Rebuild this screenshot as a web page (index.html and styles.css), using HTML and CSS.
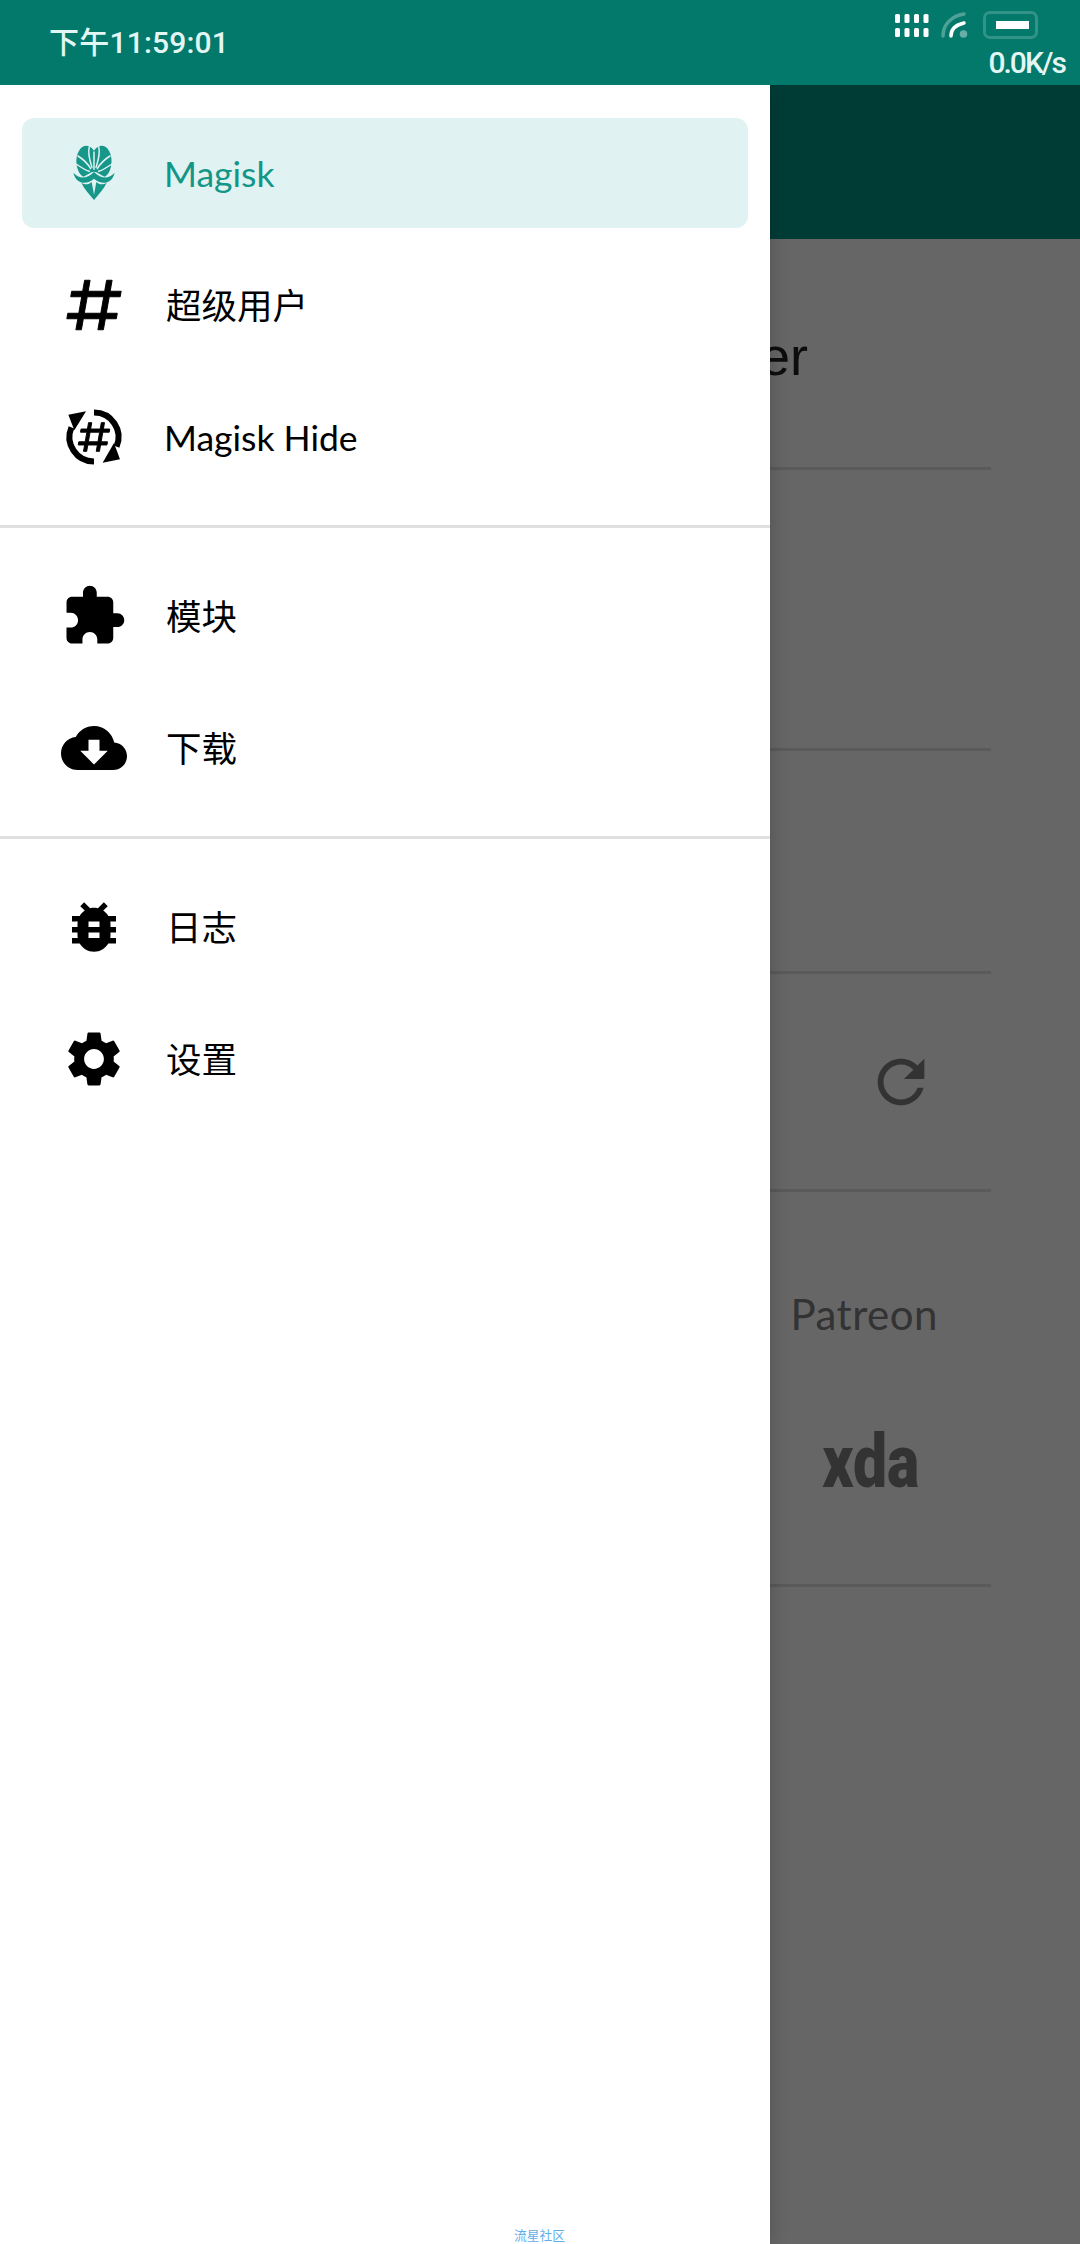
FILE: index.html
```html
<!DOCTYPE html>
<html lang="zh">
<head>
<meta charset="utf-8">
<title>Magisk</title>
<link rel="stylesheet" href="styles.css">
</head>
<body>
<div class="app">
  <header class="statusbar">
    <div class="time">下午11:59:01</div>
    <div class="status-right">
      <div class="status-icons">
        <svg class="ic-signal" width="36" height="26" viewBox="0 0 36 26" fill="#fff">
          <rect x="0" y="2" width="5" height="9" rx="1.5"/><rect x="9.500" y="2" width="5" height="9" rx="1.500"/><rect x="19" y="2" width="5" height="9" rx="1.500"/><rect x="28.500" y="2" width="5" height="9" rx="1.500"/>
          <rect x="0" y="16" width="5" height="9" rx="1.500"/><rect x="9.500" y="16" width="5" height="9" rx="1.500"/><rect x="19" y="16" width="5" height="9" rx="1.500"/><rect x="28.500" y="16" width="5" height="9" rx="1.500"/>
        </svg>
        <svg class="ic-wifi" width="30" height="28" viewBox="0 0 30 28" fill="none">
          <path d="M3 25C3 14 11 5 24 3" stroke="#fff" stroke-opacity=".3" stroke-width="3.500" stroke-linecap="round"/>
          <path d="M11 25C11 19 15 14 24 12" stroke="#fff" stroke-width="3.500" stroke-linecap="round"/>
          <circle cx="23.500" cy="23" r="3.800" fill="#fff" fill-opacity=".4"/>
        </svg>
        <div class="battery"><span class="battery-level"></span></div>
      </div>
      <div class="speed">0.0K/s</div>
    </div>
  </header>

  <main class="main">
    <div class="toolbar"></div>
    <section class="row row-title"><span class="title">Magisk Manager</span></section>
    <section class="row row-a"></section>
    <section class="row row-b"></section>
    <section class="row row-refresh">
      <svg class="refresh" width="70" height="70" viewBox="0 0 24 24"><path d="M17.65 6.35C16.2 4.9 14.21 4 12 4c-4.42 0-7.99 3.58-7.99 8s3.57 8 7.99 8c3.730 0 6.840-2.550 7.730-6h-2.080c-.82 2.330-3.040 4-5.650 4-3.310 0-6-2.690-6-6s2.690-6 6-6c1.660 0 3.140.69 4.220 1.780L13 11h7V4l-2.350 2.350z"/></svg>
    </section>
    <section class="row row-links">
      <span class="patreon">Patreon</span>
      <span class="xda">xda</span>
    </section>
  </main>

  <div class="scrim"></div>

  <nav class="drawer">
    <div class="group">
      <a class="item active">
        <svg class="icon" viewBox="31 30 198 198">
          <path fill="#17968a" d="M130 62C118 44 98 42 88 58C76 74 74 100 82 120C86 130 90 136 98 140C110 135 120 125 130 125C140 125 150 135 162 140C170 136 174 130 178 120C186 100 184 74 172 58C162 42 142 44 130 62Z"/>
          <g fill="none" stroke="#e0f2f1" stroke-width="4.500" stroke-linecap="round">
            <path d="M130 118V66"/>
            <path d="M124 112C118 92 110 72 116 50"/>
            <path d="M136 112C142 92 150 72 144 50"/>
            <path d="M120 116C112 102 98 88 82 78"/>
            <path d="M140 116C148 102 162 88 178 78"/>
            <path d="M116 124C106 122 94 114 76 102"/>
            <path d="M144 124C154 122 166 114 184 102"/>
          </g>
          <path fill="#17968a" d="M68 128C84 146 106 150 130 126C154 150 176 146 192 128C182 166 150 164 130 146C110 164 78 166 68 128Z"/>
          <path fill="#17968a" d="M92 158C100 176 116 192 130 210C144 192 160 176 168 158C156 166 146 164 137 156L130 194L123 156C114 164 104 166 92 158Z"/>
        </svg>
        <span class="label latin">Magisk</span>
      </a>
      <a class="item">
        <svg class="icon" viewBox="0 0 24 24"><path stroke="#000" stroke-width=".35" d="M5.410 21L6.120 17H2.120L2.470 15H6.470L7.530 9H3.530L3.880 7H7.880L8.590 3H10.590L9.880 7H15.880L16.590 3H18.590L17.880 7H21.880L21.530 9H17.530L16.470 15H20.470L20.120 17H16.120L15.410 21H13.410L14.120 17H8.120L7.410 21H5.410M9.530 9L8.470 15H14.470L15.530 9H9.530Z"/></svg>
        <span class="label">超级用户</span>
      </a>
      <a class="item">
        <svg class="icon" viewBox="0 0 24 24">
          <path fill="none" stroke="#000" stroke-width="2.200" d="M12 3.100A8.900 8.900 0 0 1 20.200 15.500"/>
          <path fill="none" stroke="#000" stroke-width="2.200" d="M12 20.900A8.900 8.900 0 0 1 3.800 8.500"/>
          <path d="M15.150 21.330L21.450 20.120L19.270 14.180Z"/>
          <path d="M2.670 3.880L9.100 2.670L4.850 9.580Z"/>
          <path transform="translate(12 12) scale(.58) translate(-12 -12)" stroke="#000" stroke-width=".6" d="M5.410 21L6.120 17H2.120L2.470 15H6.470L7.530 9H3.530L3.880 7H7.880L8.590 3H10.590L9.880 7H15.880L16.590 3H18.590L17.880 7H21.880L21.530 9H17.530L16.470 15H20.470L20.120 17H16.120L15.410 21H13.410L14.120 17H8.120L7.410 21H5.410M9.530 9L8.470 15H14.470L15.530 9H9.530Z"/>
        </svg>
        <span class="label latin">Magisk Hide</span>
      </a>
    </div>
    <div class="group">
      <a class="item">
        <svg class="icon" viewBox="0 0 24 24"><path d="M20.500 11H19V7c0-1.100-.9-2-2-2h-4V3.500C13 2.120 11.880 1 10.500 1S8 2.120 8 3.500V5H4c-1.100 0-1.990.9-1.990 2v3.800H3.500c1.490 0 2.700 1.210 2.700 2.700s-1.210 2.700-2.700 2.700H2V20c0 1.100.9 2 2 2h3.800v-1.500c0-1.490 1.210-2.700 2.700-2.700 1.490 0 2.700 1.210 2.700 2.700V22H17c1.100 0 2-.9 2-2v-4h1.500c1.380 0 2.500-1.120 2.500-2.500S21.880 11 20.500 11z"/></svg>
        <span class="label">模块</span>
      </a>
      <a class="item">
        <svg class="icon" viewBox="0 0 24 24"><path d="M19.350 10.040C18.670 6.590 15.640 4 12 4 9.110 4 6.600 5.640 5.350 8.040 2.340 8.360 0 10.910 0 14c0 3.310 2.690 6 6 6h13c2.760 0 5-2.240 5-5 0-2.640-2.050-4.780-4.650-4.960zM17 13l-5 5-5-5h3V9h4v4h3z"/></svg>
        <span class="label">下载</span>
      </a>
    </div>
    <div class="group">
      <a class="item">
        <svg class="icon" viewBox="0 0 24 24"><path d="M20 8h-2.810c-.45-.78-1.070-1.450-1.820-1.960L17 4.410 15.590 3l-2.170 2.170C12.960 5.060 12.490 5 12 5c-.49 0-.96.06-1.410.17L8.410 3 7 4.410l1.620 1.630C7.880 6.550 7.260 7.220 6.810 8H4v2h2.090c-.05.33-.09.66-.09 1v1H4v2h2v1c0 .34.04.67.09 1H4v2h2.810c1.040 1.790 2.970 3 5.190 3s4.150-1.210 5.190-3H20v-2h-2.090c.05-.33.09-.66.09-1v-1h2v-2h-2v-1c0-.34-.04-.67-.09-1H20V8zm-6 8h-4v-2h4v2zm0-4h-4v-2h4v2z"/></svg>
        <span class="label">日志</span>
      </a>
      <a class="item">
        <svg class="icon" viewBox="0 0 24 24"><path d="M19.140 12.940c.04-.3.06-.61.06-.94 0-.32-.02-.64-.07-.94l2.030-1.580c.18-.14.23-.41.12-.61l-1.920-3.320c-.12-.22-.37-.29-.59-.22l-2.390.96c-.5-.38-1.030-.7-1.620-.94l-.36-2.540c-.04-.24-.24-.41-.48-.41h-3.840c-.24 0-.43.17-.47.41l-.36 2.540c-.59.24-1.130.57-1.620.94l-2.390-.96c-.22-.08-.47 0-.59.22L2.740 8.870c-.12.21-.08.47.12.61l2.030 1.580c-.05.3-.09.63-.09.94s.02.64.07.94l-2.030 1.580c-.18.14-.23.41-.12.61l1.920 3.320c.12.22.37.29.59.22l2.390-.96c.5.38 1.030.7 1.620.94l.36 2.540c.05.24.24.41.48.41h3.840c.24 0 .44-.17.47-.41l.36-2.540c.59-.24 1.130-.56 1.620-.94l2.390.96c.22.08.47 0 .59-.22l1.920-3.320c.12-.22.07-.47-.12-.61l-2.010-1.580zM12 15.600c-1.980 0-3.600-1.620-3.600-3.600s1.620-3.600 3.600-3.600 3.600 1.620 3.600 3.600-1.620 3.600-3.600 3.600z"/></svg>
        <span class="label">设置</span>
      </a>
    </div>
  </nav>

  <div class="watermark">流星社区</div>
</div>
</body>
</html>
```
FILE: styles.css
```css
* { box-sizing: border-box; }
html, body { margin: 0; padding: 0; }
body { font-family: "Lato", "Noto Sans CJK SC", sans-serif; background: #fff; }

.app {
  position: relative;
  width: 1080px;
  height: 2244px;
  overflow: hidden;
  display: flex;
  flex-direction: column;
}

/* status bar */
.statusbar {
  flex: none;
  height: 85px;
  background: #02796b;
  color: #e2f6f3;
  display: flex;
  justify-content: space-between;
  padding: 0 15px 0 49px;
  font-family: "Roboto", "Noto Sans CJK SC", sans-serif;
  position: relative;
  z-index: 3;
}
.time { font-size: 30px; font-weight: 500; letter-spacing: .2px; line-height: 85px; }
.status-right {
  display: flex;
  flex-direction: column;
  align-items: flex-end;
  padding-top: 11px;
}
.status-icons {
  display: flex;
  align-items: center;
  gap: 13px;
  height: 28px;
  margin-right: 27px;
}
.ic-wifi { margin-left: -4px; }
.battery {
  width: 55px;
  height: 28px;
  border: 3px solid rgba(255, 255, 255, .2);
  border-radius: 7px;
  padding: 7px 6px 7px 10px;
  display: flex;
}
.battery-level { flex: 1; background: #fff; }
.speed {
  font-size: 30px;
  font-weight: 500;
  line-height: 34px;
  letter-spacing: -2px;
  margin-top: 7px;
}

/* page behind the drawer */
.main { flex: 1; display: flex; flex-direction: column; padding: 0 89px; }
.toolbar { flex: none; height: 154px; margin: 0 -89px; background: #009688; }
.row { flex: none; border-bottom: 3px solid #e0e0e0; display: flex; }
.row-title { height: 231px; justify-content: flex-end; padding: 85px 183px 0 0; }
.title {
  font-family: "Liberation Sans", sans-serif;
  font-size: 54px;
  line-height: 64px;
  color: #212121;
  white-space: nowrap;
}
.row-a { height: 281px; }
.row-b { height: 223px; }
.row-refresh { height: 218px; justify-content: flex-end; align-items: center; padding-right: 55px; }
.refresh { fill: #808080; }
.row-links {
  height: 395px;
  flex-direction: column;
  align-items: flex-end;
  color: #808080;
}
.patreon {
  font-size: 42px;
  line-height: 50px;
  margin: 97px 53px 0 0;
  letter-spacing: 0.5px;
}
.xda {
  font-family: "Roboto", sans-serif;
  font-weight: 900;
  font-size: 74px;
  line-height: 74px;
  margin: 86px 72px 0 0;
  transform: scaleX(.82);
  transform-origin: right center;
}

/* overlays */
.scrim {
  position: absolute;
  inset: 85px 0 0 0;
  background: rgba(0, 0, 0, .6);
}
.drawer {
  position: absolute;
  top: 85px;
  left: 0;
  bottom: 0;
  width: 770px;
  background: #fff;
  box-shadow: 0 0 18px rgba(0, 0, 0, .22);
}
.group {
  padding: 33px 22px;
  display: flex;
  flex-direction: column;
  gap: 22px;
  border-bottom: 3px solid #e0e0e0;
}
.group:last-child { border-bottom: none; }
.item {
  height: 110px;
  display: flex;
  align-items: center;
  gap: 38px;
  padding-left: 39px;
  border-radius: 12px;
  color: #000;
}
.item.active { background: #e0f2f1; color: #129688; }
.icon { width: 66px; height: 66px; flex: none; fill: #000; }
.label { font-size: 35.500px; line-height: 44px; white-space: nowrap; padding: 2px 0 0 1px; }
.label.latin { margin-left: -2px; }

.watermark {
  position: absolute;
  left: 514px;
  bottom: 3px;
  font-family: "Noto Sans CJK SC", sans-serif;
  font-size: 12.750px;
  line-height: 13px;
  color: #62aeea;
}
```
